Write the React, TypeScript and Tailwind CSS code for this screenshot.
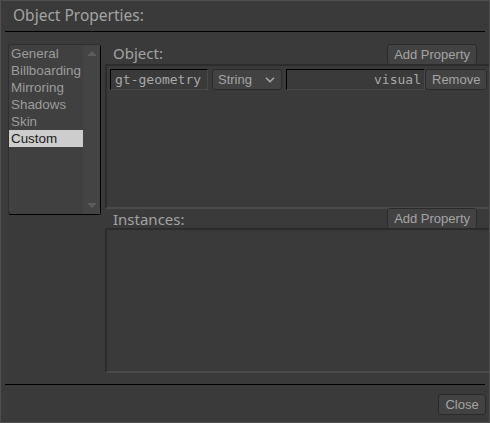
import { ChevronDown } from 'lucide-react';

const labelFont = { fontFamily: '"Noto Sans", "DejaVu Sans", sans-serif' };

function Button({ children, className = '' }: { children: React.ReactNode; className?: string }) {
  return (
    <button
      className={`h-[21px] px-[6px] rounded-[3px] bg-[#424242] border border-[#2a2a2a] text-[13px] text-[#a4a4a4] leading-none font-['Liberation_Sans',Arial,sans-serif] ${className}`}
    >
      {children}
    </button>
  );
}

const sections = ['General', 'Billboarding', 'Mirroring', 'Shadows', 'Skin', 'Custom'];

export default function App() {
  return (
    <div className="w-[490px] h-[423px] bg-[#3a3a3a] border border-[#4f4f4f] flex flex-col overflow-hidden">
      {/* title */}
      <div className="h-[30px] pl-[12px] pt-[3px] text-[15.5px] text-[#a3a3a3]" style={labelFont}>
        Object Properties:
      </div>
      <div className="mx-[4px] h-px bg-black" />

      <div className="flex flex-1 pt-[12px]">
        {/* section list */}
        <div className="ml-[7px] w-[93px] h-[171px] flex rounded-[3px] border border-[#2f2f2f] border-r-black border-b-black bg-[#404040] font-['Liberation_Sans',Arial,sans-serif] text-[13.4px] text-[#9c9c9c]">
          <ul className="flex-1">
            {sections.map((s) => (
              <li
                key={s}
                className={`h-[17px] leading-[17px] pl-[2px] ${s === 'Custom' ? 'bg-[#cdcdcd] text-[#1a1a1a]' : ''}`}
              >
                {s}
              </li>
            ))}
          </ul>
          <div className="w-[17px] bg-[#444444] flex flex-col justify-between items-center py-[6px]">
            <div className="w-0 h-0 border-l-[5px] border-r-[5px] border-b-[5px] border-l-transparent border-r-transparent border-b-[#5c5c5c]" />
            <div className="w-0 h-0 border-l-[5px] border-r-[5px] border-t-[5px] border-l-transparent border-r-transparent border-t-[#5c5c5c]" />
          </div>
        </div>

        {/* properties */}
        <div className="flex-1 ml-[4px] flex flex-col">
          <div className="flex items-start justify-between h-[20px] pl-[8px] pr-[12px]">
            <span className="text-[15px] leading-[20px] text-[#a3a3a3] -mt-[1px]" style={labelFont}>Object:</span>
            <Button>Add Property</Button>
          </div>
          <div className="h-[145px] border-t-[2px] border-l-[2px] border-[#2c2c2c] border-b-[2px] border-b-[#4a4a4a] pt-[3px] pl-[3px] pr-[2px]">
            <div className="flex items-center gap-[4px] h-[21px]">
              <div className="w-[98px] h-[21px] border border-[#4a4a4a] border-t-black border-l-black bg-[#3a3a3a] text-[13px] text-[#a8a8a8] font-['DejaVu_Sans_Mono',monospace] leading-[19px] pl-[4px] overflow-hidden whitespace-nowrap">
                gt-geometry
              </div>
              <div className="w-[70px] h-[21px] rounded-[3px] border border-[#2a2a2a] bg-[#424242] flex items-center justify-between pl-[5px] pr-[4px] text-[13px] text-[#a4a4a4] font-['Liberation_Sans',Arial,sans-serif]">
                <span>String</span>
                <ChevronDown size={14} strokeWidth={3} className="text-[#a4a4a4]" />
              </div>
              <div className="flex items-center">
                <div className="w-[139px] h-[21px] border border-[#4a4a4a] border-t-black border-l-black bg-[#3a3a3a] text-[13px] text-[#a8a8a8] font-['DejaVu_Sans_Mono',monospace] leading-[19px] pr-[3px] text-right">
                  visual
                </div>
                <Button className="w-[62px] px-0">Remove</Button>
              </div>
            </div>
          </div>
          <div className="flex items-start justify-between h-[20px] pl-[8px] pr-[12px] -mt-[1px]">
            <span className="text-[15px] leading-[20px] text-[#a3a3a3] mt-[1px]" style={labelFont}>Instances:</span>
            <Button>Add Property</Button>
          </div>
          <div className="h-[145px] border-t-[2px] border-l-[2px] border-[#2c2c2c] border-b-[2px] border-b-[#4a4a4a]" />
        </div>
      </div>

      <div className="mx-[4px] h-px bg-black" />
      <div className="h-[37px] flex justify-end items-start pt-[9px] pr-[3px]">
        <Button className="w-[48px] px-0">Close</Button>
      </div>
    </div>
  );
}
